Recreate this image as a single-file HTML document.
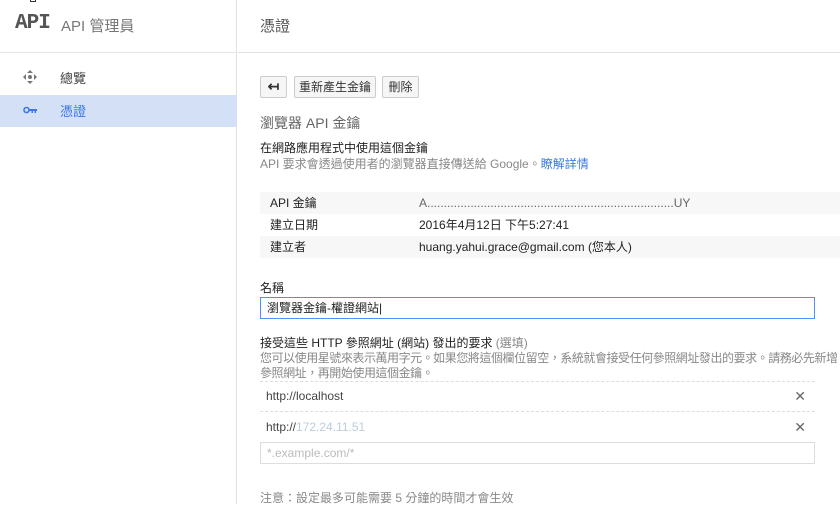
<!DOCTYPE html>
<html><head><meta charset="utf-8"><style>
*{margin:0;padding:0;box-sizing:border-box}
body{width:840px;height:504px;overflow:hidden;background:#fff;font-family:"Liberation Sans","Noto Sans CJK TC",sans-serif;font-size:12px;color:#222;position:relative}
.a{position:absolute;white-space:nowrap}
.side{position:absolute;left:0;top:0;width:237px;height:504px;border-right:1px solid #e0e0e0;background:#fff}
.btn{position:absolute;top:76px;height:22px;border:1px solid #ccc;border-radius:2px;background:#f6f6f6;font-size:12px;line-height:20px;text-align:center;color:#333}
.g{color:#888}
.row{position:absolute;left:260px;width:580px;height:22px;line-height:22px}
.x{position:absolute;right:34px;color:#666;font-size:14px}
</style></head><body>
<div class="side">
<div class="a" style="left:30px;top:-8px;width:6px;height:10px;border:1px solid #333;border-top:none"></div>
<div class="a" style="left:15px;top:12px;font-family:'Liberation Mono',monospace;font-weight:bold;font-size:21px;color:#555;letter-spacing:-1px">API</div>
<div class="a" style="left:61px;top:15px;font-size:15px;color:#777">API 管理員</div>
<div class="a" style="left:0;top:52px;width:237px;border-top:1px solid #e6e6e6"></div>
<svg class="a" style="left:23px;top:70px" width="14" height="14" viewBox="0 0 14 14" fill="#777"><path d="M7 0l3 3H4zM7 14l3-3H4zM0 7l3-3v6zM14 7l-3-3v6z"/><circle cx="7" cy="7" r="2"/></svg>
<div class="a" style="left:60px;top:68px;font-size:13px;color:#444">總覽</div>
<div class="a" style="left:0;top:95px;width:237px;height:32px;background:#d3e0f5"></div>
<svg class="a" style="left:23px;top:106px" width="14" height="8" viewBox="0 0 14 8"><circle cx="3.5" cy="4" r="2.5" fill="none" stroke="#3b78e7" stroke-width="1.6"/><path d="M6 3h8v2h-1v2h-1.5V5H10v2H8.5V5H6z" fill="#3b78e7"/></svg>
<div class="a" style="left:60px;top:101px;font-size:13px;color:#3b78e7">憑證</div>
</div>
<div class="a" style="left:238px;top:52px;width:602px;border-top:1px solid #e0e0e0"></div>
<div class="a" style="left:260px;top:15px;font-size:15px;color:#555">憑證</div>
<div class="btn" style="left:260px;width:27px;font-weight:bold;font-size:14px;line-height:18px">↤</div>
<div class="btn" style="left:294px;width:82px">重新產生金鑰</div>
<div class="btn" style="left:382px;width:37px">刪除</div>
<div class="a" style="left:260px;top:113px;font-size:14px;color:#666">瀏覽器 API 金鑰</div>
<div class="a" style="left:260px;top:139px">在網路應用程式中使用這個金鑰</div>
<div class="a g" style="left:260px;top:155px">API 要求會透過使用者的瀏覽器直接傳送給 Google。<span style="color:#3b78e7">瞭解詳情</span></div>
<div class="row" style="top:192px;background:#f7f7f7"><span class="a" style="left:10px">API 金鑰</span><span class="a" style="left:159px;color:#666">A..........................................................................UY</span></div>
<div class="row" style="top:214px"><span class="a" style="left:10px">建立日期</span><span class="a" style="left:159px">2016年4月12日 下午5:27:41</span></div>
<div class="row" style="top:236px;background:#f7f7f7"><span class="a" style="left:10px">建立者</span><span class="a" style="left:159px">huang.yahui.grace@gmail.com (您本人)</span></div>
<div class="a" style="left:260px;top:279px">名稱</div>
<div class="a" style="left:260px;top:297px;width:555px;height:22px;border:1px solid #4d90fe;padding-left:6px;line-height:20px">瀏覽器金鑰-權證網站|</div>
<div class="a" style="left:260px;top:334px">接受這些 HTTP 參照網址 (網站) 發出的要求 <span class="g">(選填)</span></div>
<div class="a g" style="left:260px;top:349px;letter-spacing:-0.45px">您可以使用星號來表示萬用字元。如果您將這個欄位留空，系統就會接受任何參照網址發出的要求。請務必先新增</div>
<div class="a g" style="left:260px;top:364px;letter-spacing:-0.45px">參照網址，再開始使用這個金鑰。</div>
<div class="a" style="left:260px;top:381px;width:555px;border-top:1px dashed #ddd"></div>
<div class="row" style="top:385px"><span class="a" style="left:6px;color:#444">http://localhost</span><span class="x">✕</span></div>
<div class="a" style="left:260px;top:411px;width:555px;border-top:1px dashed #ddd"></div>
<div class="row" style="top:416px"><span class="a" style="left:6px;color:#444">http://<span style="color:#bcd">172.24.11.51</span></span><span class="x">✕</span></div>
<div class="a" style="left:260px;top:442px;width:555px;height:22px;border:1px solid #ddd;padding-left:6px;line-height:20px;color:#bbb">*.example.com/*</div>
<div class="a g" style="left:260px;top:489px">注意：設定最多可能需要 5 分鐘的時間才會生效</div>
</body></html>
